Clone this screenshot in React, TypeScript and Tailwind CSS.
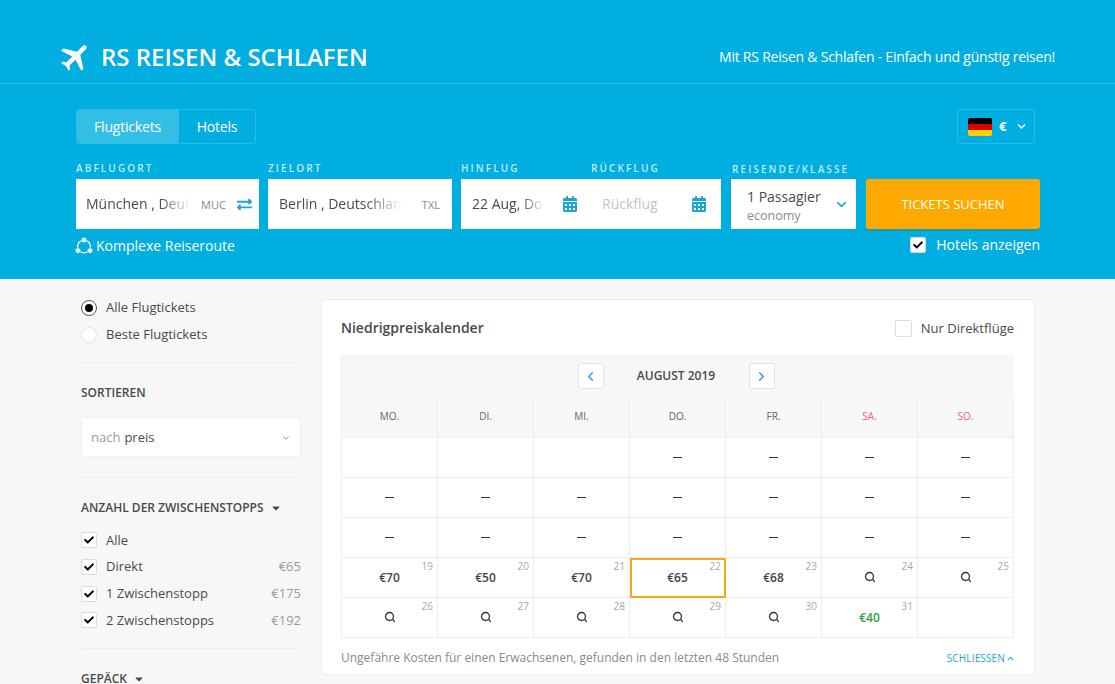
import React from "react";
import { FaExchangeAlt, FaCalendarAlt, FaCheck, FaChevronDown, FaChevronUp, FaCaretDown } from "react-icons/fa";
import { MdFlight } from "react-icons/md";
import { ChevronLeft, ChevronRight, ChevronDown, Search } from "lucide-react";

const font = { fontFamily: '"Open Sans", sans-serif' };

function Label({ children, className = "mb-[4px]" }: { children: React.ReactNode; className?: string }) {
  return <div className={`h-[13px] text-[10px] leading-[13px] font-semibold tracking-[2.1px] text-[#bdecf9] uppercase ${className}`}>{children}</div>;
}

function Check() {
  return (
    <span className="w-[16px] h-[16px] shrink-0 bg-white border border-[#dcdcdc] rounded-[2px] flex items-center justify-center text-black">
      <FaCheck size={10} />
    </span>
  );
}

function Divider({ className = "" }: { className?: string }) {
  return <div className={`h-px bg-[#eeeeee] ${className}`} />;
}

function Stop({ label, price }: { label: string; price?: string }) {
  return (
    <div className="h-[26.67px] flex items-center text-[13px] text-[#4a4a4a]">
      <Check />
      <span className="ml-[9px]">{label}</span>
      {price && <span className="ml-auto text-[#9a9a9a]">{price}</span>}
    </div>
  );
}

type Cell = { t: "empty" } | { t: "dash" } | { t: "price"; v: string; d: number; sel?: boolean; green?: boolean } | { t: "search"; d: number };

const e: Cell = { t: "empty" };
const x: Cell = { t: "dash" };
const cells: Cell[] = [
  e, e, e, x, x, x, x,
  x, x, x, x, x, x, x,
  x, x, x, x, x, x, x,
  { t: "price", v: "€70", d: 19 },
  { t: "price", v: "€50", d: 20 },
  { t: "price", v: "€70", d: 21 },
  { t: "price", v: "€65", d: 22, sel: true },
  { t: "price", v: "€68", d: 23 },
  { t: "search", d: 24 },
  { t: "search", d: 25 },
  { t: "search", d: 26 },
  { t: "search", d: 27 },
  { t: "search", d: 28 },
  { t: "search", d: 29 },
  { t: "search", d: 30 },
  { t: "price", v: "€40", d: 31, green: true },
  e,
];

function CalCell({ c }: { c: Cell }) {
  const sel = c.t === "price" && c.sel;
  return (
    <div className={`relative h-[40px] border-r border-b border-[#eeeeee] flex items-center justify-center text-[#444] ${sel ? "outline-2 -outline-offset-2 outline-[#f5a623]" : ""}`}>
      {c.t === "dash" && <span className="block w-[9px] h-px bg-[#333]" />}
      {c.t === "price" && (
        <span className={`mt-[1px] text-[12px] font-semibold ${c.green ? "text-[#2f9e3f]" : "text-[#444]"}`}>{c.v}</span>
      )}
      {c.t === "search" && <Search size={12} strokeWidth={2.6} className="text-[#333] mt-[-1px]" />}
      {(c.t === "price" || c.t === "search") && (
        <span className="absolute top-[1px] right-[4px] text-[10px] leading-[14px] text-[#a8a8a8]">{c.d}</span>
      )}
    </div>
  );
}

function ComplexIcon() {
  return (
    <svg width="18" height="18" viewBox="0 0 18 18" className="shrink-0 -ml-px">
      <circle cx="9" cy="9.5" r="6.4" fill="none" stroke="#fff" strokeWidth="1.3" />
      <circle cx="9" cy="3" r="2.7" fill="#fff" stroke="#00aedf" strokeWidth="0.6" />
      <circle cx="3" cy="13.6" r="2.7" fill="#fff" stroke="#00aedf" strokeWidth="0.6" />
      <circle cx="15" cy="13.6" r="2.7" fill="#fff" stroke="#00aedf" strokeWidth="0.6" />
    </svg>
  );
}

const fade = "[mask-image:linear-gradient(to_right,black_70%,transparent_100%)]";

export default function App() {
  return (
    <div style={font} className="w-[1115px] h-[684px] overflow-hidden bg-[#f7f7f7]">
      <header className="h-[279px] bg-[#00aedf]">
        <div className="h-[84px] border-b border-[#2dbde6] pl-[58px] pr-[60px] pt-[30px] flex items-center justify-between text-white">
          <div className="flex items-center">
            <MdFlight size={36} className="rotate-45" />
            <span className="ml-[7px] text-[24px] font-semibold leading-none">RS REISEN &amp; SCHLAFEN</span>
          </div>
          <span className="text-[14px] tracking-[-0.23px]">Mit RS Reisen &amp; Schlafen - Einfach und günstig reisen!</span>
        </div>

        <div className="pl-[76px] pr-[75px] pt-[25px]">
          <div className="flex justify-between items-start">
            <div className="flex h-[35px] border border-[#2bbce6] rounded-[3px] text-[14px] tracking-[-0.2px] text-white">
              <div className="w-[102px] bg-[#33bee6] rounded-l-[3px] border-r border-[#2bbce6] flex items-center justify-center">Flugtickets</div>
              <div className="w-[76px] flex items-center justify-center">Hotels</div>
            </div>
            <div className="w-[78px] h-[35px] mr-[5px] border border-[#2bbce6] rounded-[3px] flex items-center pl-[10px] text-white">
              <span className="w-[24px] h-[18px] rounded-[2px] overflow-hidden flex flex-col">
                <span className="flex-1 bg-black" />
                <span className="flex-1 bg-[#dd0000]" />
                <span className="flex-1 bg-[#ffce00]" />
              </span>
              <span className="ml-[7px] text-[13px] font-bold">€</span>
              <FaChevronDown size={9} className="ml-[11px]" />
            </div>
          </div>

          <div className="mt-[18px] flex items-start">
            <div className="w-[183px] mr-[9px]">
              <Label>Abflugort</Label>
              <div className="h-[50px] bg-white flex items-center pl-[10px] pr-[7px]">
                <span className={`w-[105px] mb-[2px] overflow-hidden whitespace-nowrap text-[14px] text-[#4a4a4a] ${fade}`}>München , Deutschland</span>
                <span className="ml-[10px] mt-[3px] text-[11px] text-[#8a8a8a]">MUC</span>
                <FaExchangeAlt size={15} className="ml-auto text-[#1ba6d2]" />
              </div>
            </div>
            <div className="w-[184px] mr-[9px]">
              <Label>Zielort</Label>
              <div className="h-[50px] bg-white flex items-center pl-[11px] pr-[12px]">
                <span className={`w-[123px] mb-[2px] overflow-hidden whitespace-nowrap text-[14px] text-[#4a4a4a] ${fade}`}>Berlin , Deutschland</span>
                <span className="ml-auto mt-[3px] text-[11px] text-[#8a8a8a]">TXL</span>
              </div>
            </div>
            <div className="w-[260px] mr-[10px]">
              <div className="flex">
                <Label className="w-[130px] mb-[4px]">Hinflug</Label>
                <Label className="mb-[4px]">Rückflug</Label>
              </div>
              <div className="h-[50px] bg-white flex items-center pl-[11px] pr-[14px]">
                <span className={`w-[72px] mb-[2px] overflow-hidden whitespace-nowrap text-[14px] text-[#4a4a4a] ${fade}`}>22 Aug, Do</span>
                <FaCalendarAlt size={16} className="ml-[18px] text-[#1ba6d2]" />
                <span className="ml-[24px] mb-[2px] text-[14px] text-[#c4c4c4]">Rückflug</span>
                <FaCalendarAlt size={16} className="ml-auto text-[#1ba6d2]" />
              </div>
            </div>
            <div className="w-[125px] mr-[10px]">
              <Label className="mt-px mb-[3px] pl-px">Reisende/Klasse</Label>
              <div className="h-[50px] bg-white flex items-center pl-[16px] pr-[7px]">
                <div className="mt-[3px]">
                  <div className="text-[14px] leading-[20px] text-[#4a4a4a]">1 Passagier</div>
                  <div className="text-[12.5px] leading-[18px] text-[#8a8a8a]">economy</div>
                </div>
                <ChevronDown size={15} strokeWidth={2.5} className="ml-auto text-[#1ba6d2]" />
              </div>
            </div>
            <div className="w-[174px] pt-[17px]">
              <div className="h-[50px] pt-[2px] bg-[#ffa900] rounded-[3px] shadow-[0_2px_0_#1f9bb0] flex items-center justify-center text-[13px] text-white">TICKETS SUCHEN</div>
            </div>
          </div>

          <div className="mt-[5px] flex items-center justify-between">
            <div className="flex items-center text-[14px] text-white">
              <ComplexIcon />
              <span className="ml-[3px]">Komplexe Reiseroute</span>
            </div>
            <div className="flex items-center text-[14px] text-white mb-[2px]">
              <Check />
              <span className="ml-[10px]">Hotels anzeigen</span>
            </div>
          </div>
        </div>
      </header>

      <main className="flex items-start pl-[81px] pr-[80px] pt-[20px]">
        <aside className="w-[220px] mr-[20px] shrink-0 text-[#4a4a4a] -mt-[5px]">
          <div className="flex items-center h-[27px] text-[13px]">
            <span className="w-[16px] h-[16px] rounded-full bg-white border border-[#555] flex items-center justify-center">
              <span className="w-[8px] h-[8px] rounded-full bg-black" />
            </span>
            <span className="ml-[9px]">Alle Flugtickets</span>
          </div>
          <div className="flex items-center h-[27px] text-[13px]">
            <span className="w-[16px] h-[16px] rounded-full bg-white border border-[#e2e2e2]" />
            <span className="ml-[9px]">Beste Flugtickets</span>
          </div>
          <Divider className="mt-[14px]" />
          <div className="mt-[22px] text-[12px] leading-[16px] font-semibold text-[#4a4a4a]">SORTIEREN</div>
          <div className="mt-[16px] h-[40px] pt-[1px] bg-white rounded-[3px] border border-[#f0f0f0] flex items-center pl-[9px] pr-[9px] text-[13px]">
            <span className="text-[#9a9a9a]">nach</span>
            <span className="ml-[4px]">preis</span>
            <ChevronDown size={10} className="ml-auto text-[#777]" />
          </div>
          <Divider className="mt-[20px]" />
          <div className="mt-[22px] flex items-center text-[12px] leading-[16px] font-semibold">
            ANZAHL DER ZWISCHENSTOPPS
            <FaCaretDown size={12} className="ml-[6px]" />
          </div>
          <div className="mt-[11px]">
            <Stop label="Alle" />
            <Stop label="Direkt" price="€65" />
            <Stop label="1 Zwischenstopp" price="€175" />
            <Stop label="2 Zwischenstopps" price="€192" />
          </div>
          <Divider className="mt-[14px]" />
          <div className="mt-[22px] flex items-center text-[12px] leading-[16px] font-semibold">
            GEPÄCK
            <FaCaretDown size={12} className="ml-[6px]" />
          </div>
        </aside>

        <section className="w-[714px] h-[376px] bg-white rounded-[4px] border border-[#ececec] pl-[19px] pr-[20px] shrink-0">
          <div className="h-[55px] flex items-center justify-between">
            <span className="text-[14px] font-semibold text-[#4a4a4a]">Niedrigpreiskalender</span>
            <div className="flex items-center text-[13px] text-[#4a4a4a] mt-[2px]">
              <span className="w-[17px] h-[17px] -ml-px bg-white border border-[#dcdcdc] rounded-[2px]" />
              <span className="ml-[9px]">Nur Direktflüge</span>
            </div>
          </div>
          <div className="border-l border-[#eeeeee]">
            <div className="bg-[#f7f7f7]">
              <div className="h-[42px] flex items-center justify-center pr-[4px]">
                <span className="w-[26px] h-[26px] bg-white border border-[#e4e4e4] rounded-[3px] flex items-center justify-center text-[#1ba6d2]">
                  <ChevronLeft size={15} />
                </span>
                <span className="w-[145px] text-center text-[12px] font-semibold text-[#4a4a4a]">AUGUST 2019</span>
                <span className="w-[26px] h-[26px] bg-white border border-[#e4e4e4] rounded-[3px] flex items-center justify-center text-[#1ba6d2]">
                  <ChevronRight size={15} />
                </span>
              </div>
              <div className="grid grid-cols-7 h-[40px]">
                {["MO.", "DI.", "MI.", "DO.", "FR.", "SA.", "SO."].map((d, i) => (
                  <div key={d} className={`border-r border-[#eeeeee] pb-[2px] flex items-center justify-center text-[10px] ${i > 4 ? "text-[#e8646e]" : "text-[#666]"}`}>{d}</div>
                ))}
              </div>
            </div>
            <div className="grid grid-cols-7 border-t border-[#eeeeee]">
              {cells.map((c, i) => <CalCell key={i} c={c} />)}
            </div>
          </div>
          <div className="mt-[11px] flex items-center justify-between">
            <span className="text-[12px] text-[#8a8a8a]">Ungefähre Kosten für einen Erwachsenen, gefunden in den letzten 48 Stunden</span>
            <span className="flex items-center text-[10px] tracking-[0.15px] text-[#1ba6d2]">SCHLIESSEN<FaChevronUp size={7} className="ml-[2px]" /></span>
          </div>
        </section>
      </main>
    </div>
  );
}
